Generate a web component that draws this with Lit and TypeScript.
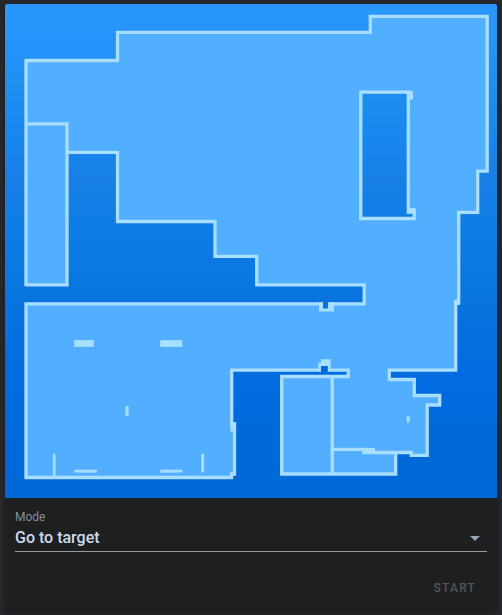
import { LitElement, html, css } from "lit";
import { customElement, state } from "lit/decorators.js";

@customElement("floor-map")
class FloorMap extends LitElement {
  static styles = css`
    :host { display: block; }
    .map { display: block; width: 100%; height: auto; }
    .floor { fill: #52aeff; fill-rule: evenodd; }
    .wall { fill: none; stroke: #a8deff; stroke-width: 3.3; stroke-linejoin: miter; }
    .block { fill: #a8deff; }
    .soft { stroke: #a8deff; stroke-width: 0.7; }
    .gap { fill: #0672e0; }
    .gap-low { fill: #006ae0; }
  `;

  render() {
    return html`
      <svg class="map" viewBox="5 4 492 494" role="img" aria-label="Floor map">
        <defs>
          <linearGradient id="sea" x1="0" y1="0" x2="0" y2="1">
            <stop offset="0" stop-color="#2a97fc" />
            <stop offset="0.1" stop-color="#2492f8" />
            <stop offset="0.16" stop-color="#208fee" />
            <stop offset="0.28" stop-color="#1985ee" />
            <stop offset="0.36" stop-color="#187fe4" />
            <stop offset="0.45" stop-color="#0f7de6" />
            <stop offset="0.62" stop-color="#0873de" />
            <stop offset="0.76" stop-color="#026be0" />
            <stop offset="0.86" stop-color="#0069da" />
            <stop offset="1" stop-color="#0068d6" />
          </linearGradient>
        </defs>
        <rect x="5" y="4" width="492" height="494" fill="url(#sea)" />
        <path class="floor" d="M26 60.5H117.5V32.3H370.3V16.3H487.2V171.2H477.7V212.3H458.7V302H455.7V370.2H389.3V379.5H414.3V395.5H439.7V405H427.2V455.3H411.3V452.5H395.7V474H281.7V376.5H348.2V370.2H231.7V424H234.5V474H231.5V477.5H26V303.8H364.2V284.8H256.7V256.3H215V221.5H117.5V152.3H67V284.8H26Z
          M360.8 92.2H408.3V212.5H414.2V218.5H360.8Z" />
        <path class="wall" d="M26 60.5H117.5V32.3H370.3V16.3H487.2V171.2H477.7V212.3H458.7V302H455.7V370.2H389.3V379.5H414.3V395.5H439.7V405H427.2V455.3H411.3V452.5H364V449.3H332.2M395.7 452.5V474H281.7V376.5H348.2V370.2H231.7V424H234.5V474H231.5V477.5H26V303.8H364.2V284.8H256.7V256.3H215V221.5H117.5V152.3H67
          M26 59V286.3M26 284.8H67V123.8H26M332.2 376.5V474
          M360.8 92.2H408.3V212H414.2V218.5H360.8Z" />
        <g class="block">
          <path d="M407 91H413V99.5H409.5V93H407Z" />
          <path d="M407 208H415.7V213.5H407Z" />
          <path d="M454.3 299.5H460V305H454.3Z" />
          <path d="M319 302.3H334V311.5H319Z" />
          <path d="M318.3 362.5H321V359.3H330.7V371.5H318.3Z" />
          <path d="M230.3 422.5H236V431.5H230.3Z" />
          <path d="M362.5 448H375V453.5H362.5Z" />
          <path d="M230.3 473H235.5V475.7H233V479H230.3Z" />
          <path class="soft" d="M74.5 340.5H93.5V346.5H74.5ZM160.5 340.5H182V346.5H160.5ZM125.8 406.5H128.2V415.5H125.8ZM74.5 470H96.5V472.2H74.5ZM160.5 470H182V472.2H160.5ZM53.2 454H55.2V476H53.2ZM201.5 454H203.8V472.2H201.5ZM407 416.5H409.3V422H407Z" />
        </g>
        <path class="gap" d="M323 302H328V308.5H323Z" />
        <path class="gap-low" d="M321 366H327.8V372H321Z" />
      </svg>
    `;
  }
}

@customElement("app-root")
class AppRoot extends LitElement {
  @state() private mode = "Go to target";

  private modes = ["Go to target", "Zone cleanup", "Room cleanup"];

  static styles = css`
    :host {
      display: block;
      box-sizing: border-box;
      min-height: 100vh;
      padding: 4px 5px;
      background: #27282c;
      font-family: Roboto, "Liberation Sans", sans-serif;
    }
    .card {
      overflow: hidden;
      border-radius: 2px 2px 4px 4px;
      background: #1d1f21;
      box-shadow: 0 1px 4px rgba(0, 0, 0, 0.4);
    }
    .controls { padding: 12px 10px 6px; }
    .label {
      display: block;
      font-size: 12px;
      line-height: 14px;
      color: #87909b;
    }
    .field { display: grid; align-items: center; border-bottom: 1px solid #979b9e; }
    .select {
      grid-area: 1 / 1;
      appearance: none;
      width: 100%;
      height: 27px;
      margin: 0;
      padding: 0 24px 0 0;
      border: 0;
      background: none;
      color: #cddceb;
      font: 500 16px/24px Roboto, "Liberation Sans", sans-serif;
    }
    .arrow {
      grid-area: 1 / 1;
      justify-self: end;
      width: 24px;
      height: 24px;
      fill: #93a5b7;
      pointer-events: none;
    }
    .actions { display: flex; justify-content: flex-end; padding-top: 18px; }
    .start {
      height: 36px;
      padding: 0 11px;
      border: 0;
      background: none;
      color: #51565c;
      font: 500 12px/36px Roboto, "Liberation Sans", sans-serif;
      letter-spacing: 0.1em;
      text-transform: uppercase;
    }
  `;

  private pick(e: Event) {
    this.mode = (e.target as HTMLSelectElement).value;
  }

  render() {
    return html`
      <main class="card">
        <floor-map></floor-map>
        <div class="controls">
          <label class="label" for="mode">Mode</label>
          <div class="field">
            <select class="select" id="mode" @change=${this.pick}>
              ${this.modes.map((m) => html`<option ?selected=${m === this.mode}>${m}</option>`)}
            </select>
            <svg class="arrow" viewBox="0 0 24 24" aria-hidden="true"><path d="M7 10h10l-5 5z" /></svg>
          </div>
          <div class="actions"><button class="start" disabled>Start</button></div>
        </div>
      </main>
    `;
  }
}
